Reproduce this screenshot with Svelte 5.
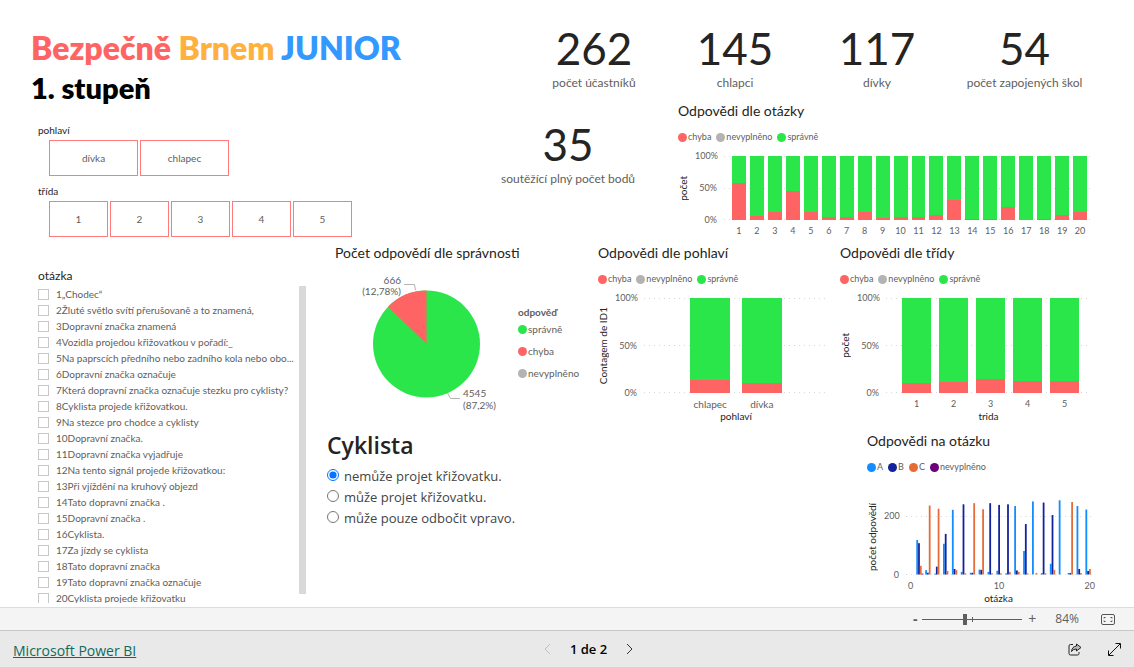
<script lang="ts">
  type Series = { name: string; color: string };
  type Bar = { label: string; chyba: number };

  const answerSeries: Series[] = [
    { name: 'chyba', color: '#ff6464' },
    { name: 'nevyplněno', color: '#b3b3b3' },
    { name: 'správně', color: '#2ae64a' },
  ];

  const optionSeries: Series[] = [
    { name: 'A', color: '#118dff' },
    { name: 'B', color: '#12239e' },
    { name: 'C', color: '#e66c37' },
    { name: 'nevyplněno', color: '#6b007b' },
  ];

  const pieLegend = [answerSeries[2], answerSeries[0], answerSeries[1]];

  const cards = [
    { value: 262, label: 'počet účastníků' },
    { value: 145, label: 'chlapci' },
    { value: 117, label: 'dívky' },
    { value: 54, label: 'počet zapojených škol' },
  ];

  const genders = ['dívka', 'chlapec'];
  const grades = ['1', '2', '3', '4', '5'];

  const questions = [
    '„Chodec“',
    'Žluté světlo svítí přerušovaně a to znamená,',
    'Dopravní značka znamená',
    'Vozidla projedou křižovatkou v pořadí:_',
    'Na paprscích předního nebo zadního kola nebo obo...',
    'Dopravní značka označuje',
    'Která dopravní značka označuje stezku pro cyklisty?',
    'Cyklista projede křižovatkou.',
    'Na stezce pro chodce a cyklisty',
    'Dopravní značka.',
    'Dopravní značka vyjadřuje',
    'Na tento signál projede křižovatkou:',
    'Při vjíždění na kruhový objezd',
    'Tato dopravní značka .',
    'Dopravní značka .',
    'Cyklista.',
    'Za jízdy se cyklista',
    'Tato dopravní značka',
    'Tato dopravní značka označuje',
    'Cyklista projede křižovatku',
  ];

  const byQuestion: Bar[] = [58, 7, 12, 45, 12, 5, 4, 12, 3, 5, 5, 8, 32, 1, 2, 20, 0, 2, 8, 12]
    .map((chyba, i) => ({ label: String(i + 1), chyba }));
  const byGender: Bar[] = [
    { label: 'chlapec', chyba: 14 },
    { label: 'dívka', chyba: 11 },
  ];
  const byGrade: Bar[] = [11, 12, 15, 13, 13].map((chyba, i) => ({ label: String(i + 1), chyba }));

  // A, B, C, nevyplněno
  const optionCounts = [
    [119, 108, 30, 3], [15, 6, 238, 0], [3, 27, 227, 0], [106, 140, 12, 0], [223, 19, 15, 0],
    [9, 242, 4, 0], [6, 6, 246, 0], [17, 16, 225, 0], [9, 246, 4, 0], [13, 240, 4, 0],
    [4, 242, 9, 0], [236, 14, 9, 0], [81, 174, 4, 0], [252, 0, 5, 0], [5, 248, 4, 0],
    [37, 205, 16, 0], [256, 0, 0, 0], [5, 5, 250, 0], [236, 19, 5, 0], [224, 12, 19, 0],
  ];

  const answers = ['nemůže projet křižovatku.', 'může projet křižovatku.', 'může pouze odbočit vpravo.'];

  let gender = $state('');
  let grade = $state('');
  let answer = $state(0);
  let zoom = $state(42);
</script>

{#snippet legend(items: Series[])}
  <ul class="legend">
    {#each items as item}
      <li><span class="dot" style="background: {item.color}"></span>{item.name}</li>
    {/each}
  </ul>
{/snippet}

{#snippet stacked(title: string, bars: Bar[], yTitle: string, xTitle: string, kind: string)}
  <section class="chart {kind}">
    <h2>{title}</h2>
    {@render legend(answerSeries)}
    <div class="body">
      <div class="y-title"><span>{yTitle}</span></div>
      <div class="y-axis"><span>100%</span><span>50%</span><span>0%</span></div>
      <div class="plot">
        {#each bars as bar}
          <div class="bar"><div class="wrong" style="height: {bar.chyba}%"></div></div>
        {/each}
      </div>
      <div class="x-axis">
        {#each bars as bar}<span>{bar.label}</span>{/each}
      </div>
      {#if xTitle}<div class="x-title">{xTitle}</div>{/if}
    </div>
  </section>
{/snippet}

<div class="app">
  <main>
    <div class="top">
      <div class="intro">
        <h1>
          <span class="red">Bezpečně</span> <span class="orange">Brnem</span> <span class="blue">JUNIOR</span>
          <small>1. stupeň</small>
        </h1>
        <div class="slicer">
          <h3>pohlaví</h3>
          <div class="tiles wide">
            {#each genders as g}
              <button aria-pressed={gender === g} onclick={() => (gender = gender === g ? '' : g)}>{g}</button>
            {/each}
          </div>
        </div>
        <div class="slicer">
          <h3>třída</h3>
          <div class="tiles">
            {#each grades as g}
              <button aria-pressed={grade === g} onclick={() => (grade = grade === g ? '' : g)}>{g}</button>
            {/each}
          </div>
        </div>
      </div>

      <div class="numbers">
        <div class="cards">
          {#each cards as card}
            <div class="card"><strong>{card.value}</strong><span>{card.label}</span></div>
          {/each}
        </div>
        <div class="second">
          <div class="card"><strong>35</strong><span>soutěžící plný počet bodů</span></div>
          {@render stacked('Odpovědi dle otázky', byQuestion, 'počet', '', 'by-question')}
        </div>
      </div>
    </div>

    <div class="bottom">
      <section class="questions">
        <h3>otázka</h3>
        <div class="scroller">
          <ul>
            {#each questions as question, i}
              <li>
                <label><input type="checkbox" /><span>{i + 1}{question}</span></label>
              </li>
            {/each}
          </ul>
          <div class="scrollbar"></div>
        </div>
      </section>

      <div class="charts">
        <section class="pie">
          <h2>Počet odpovědí dle správnosti</h2>
          <div class="pie-body">
            <svg viewBox="0 0 156 150" width="156" height="150" aria-label="Počet odpovědí dle správnosti">
              <circle cx="71.500" cy="81" r="53.500" fill="#2ae64a" />
              <path d="M71.500 81V27.500A53.500 53.500 0 0 0 33 43.800Z" fill="#ff6464" />
              <path d="M49 21.500H59.500L60.500 27M92.500 130L95.500 135.500H105" fill="none" stroke="#b3b3b3" />
              <text x="46" y="21" text-anchor="end">666</text>
              <text x="46" y="32" text-anchor="end">(12,78%)</text>
              <text x="108" y="134">4545</text>
              <text x="108" y="146">(87,2%)</text>
            </svg>
            <div class="pie-legend">
              <strong>odpověď</strong>
              {@render legend(pieLegend)}
            </div>
          </div>
        </section>
        {@render stacked('Odpovědi dle pohlaví', byGender, 'Contagem de ID1', 'pohlaví', 'by-gender')}
        {@render stacked('Odpovědi dle třídy', byGrade, 'počet', 'trida', 'by-grade')}

        <form class="quiz">
          <h2>Cyklista</h2>
          {#each answers as text, i}
            <label><input type="radio" name="answer" value={i} bind:group={answer} /><span>{text}</span></label>
          {/each}
        </form>

        <section class="chart options">
          <h2>Odpovědi na otázku</h2>
          {@render legend(optionSeries)}
          <div class="body">
            <div class="y-title"><span>počet odpovědí</span></div>
            <div class="y-axis"><span>200</span><span>0</span></div>
            <svg class="columns" viewBox="0 0 186 76" preserveAspectRatio="none" aria-label="Odpovědi na otázku">
              <path d="M0 17.500H186M0 75.500H186" stroke="#d8d8d8" stroke-dasharray="1 4" />
              {#each optionCounts as counts, q}
                {#each counts as count, s}
                  <rect
                    x={5 + (q + 1) * 8.95 + (s - 2) * 1.8}
                    y={75.5 - count * 0.29}
                    width="1.8"
                    height={count * 0.29}
                    fill={optionSeries[s].color}
                  />
                {/each}
              {/each}
            </svg>
            <div class="x-axis"><span>0</span><span>10</span><span>20</span></div>
            <div class="x-title">otázka</div>
          </div>
        </section>
      </div>
    </div>
  </main>

  <div class="zoom-bar">
    <button aria-label="Oddálit">-</button>
    <div class="slider">
      <input type="range" min="0" max="100" bind:value={zoom} aria-label="Přiblížení" />
    </div>
    <button aria-label="Přiblížit">+</button>
    <span class="percent">84%</span>
    <button class="fit" aria-label="Přizpůsobit stránce">
      <svg viewBox="0 0 14 11" width="14" height="11" fill="none" stroke="#555">
        <rect x=".5" y=".5" width="13" height="10" rx="1.500" />
        <path d="M3 4.500V3.500H4.500M9.500 3.500H11V4.500M11 6.500V7.500H9.500M4.500 7.500H3V6.500" />
      </svg>
    </button>
  </div>

  <footer>
    <div class="brand"><a href="https://powerbi.microsoft.com">Microsoft Power BI</a></div>
    <nav>
      <button aria-label="Předchozí stránka" disabled>
        <svg viewBox="0 0 7 12" width="7" height="12" fill="none" stroke="#c0c0c0"><path d="M6 1L1 6L6 11" /></svg>
      </button>
      <span>1 de 2</span>
      <button aria-label="Další stránka">
        <svg viewBox="0 0 7 12" width="7" height="12" fill="none" stroke="#333"><path d="M1 1L6 6L1 11" /></svg>
      </button>
    </nav>
    <div class="actions">
      <button aria-label="Sdílet">
        <svg viewBox="0 0 14 13" width="14" height="13" fill="none" stroke="#222" stroke-linejoin="round">
          <path d="M5 1.500H2.500Q1 1.500 1 3V10.500Q1 12 2.500 12H9.500Q11 12 11 10.500V9" />
          <path d="M8.500 1L13 4.500L8.500 8V6Q5 6 3.500 8.500Q4 3.500 8.500 3Z" fill="#bbb" />
        </svg>
      </button>
      <button aria-label="Celá obrazovka">
        <svg viewBox="0 0 13 13" width="13" height="13" fill="none" stroke="#111">
          <path d="M1 12L12 1M7.500 .5H12.500V5.500M.5 7.500V12.500H5.500" />
        </svg>
      </button>
    </div>
  </footer>
</div>

<style>
  :global(body) {
    margin: 0;
    background: #fff;
  }
  .app {
    display: flex;
    flex-direction: column;
    min-height: 100vh;
    font-family: Lato, 'Noto Sans', sans-serif;
    font-size: 10px;
    line-height: 12px;
    color: #605e5c;
  }
  h1, h2, h3, ul {
    margin: 0;
    padding: 0;
    font-weight: 400;
    list-style: none;
  }
  button {
    padding: 0;
    border: 0;
    background: none;
    color: inherit;
    font: inherit;
    cursor: pointer;
  }
  main {
    flex: 1;
  }

  .top {
    display: grid;
    grid-template-columns: 486fr 648fr;
    min-height: 243px;
  }
  .intro {
    padding: 28px 0 0 31px;
  }
  h1 {
    font-size: 32px;
    line-height: 40px;
    font-weight: 800;
    color: #000;
    white-space: nowrap;
  }
  h1 small {
    display: block;
    font-size: 29px;
  }
  .red { color: #ff6464; }
  .orange { color: #ffb140; }
  .blue { color: #3399ff; }

  .slicer {
    margin: 0 0 0 7px;
    padding-top: 16px;
  }
  .slicer + .slicer {
    padding-top: 9px;
  }
  h3 {
    font-size: 10px;
    line-height: 12px;
    color: #252423;
  }
  .tiles {
    display: grid;
    grid-template-columns: repeat(5, 59px);
    gap: 2px;
    padding: 4px 0 0 11px;
  }
  .tiles.wide {
    grid-template-columns: repeat(2, 89px);
  }
  .tiles button {
    height: 36px;
    border: 1px solid #ff7b7b;
  }
  .tiles button[aria-pressed='true'] {
    background: #ffe0e0;
  }

  .numbers {
    display: flex;
    flex-direction: column;
  }
  .cards {
    display: grid;
    grid-template-columns: 178fr 142fr 142fr 153fr;
    padding: 26px 33px 0 0;
  }
  .card {
    display: flex;
    flex-direction: column;
    align-items: center;
    white-space: nowrap;
  }
  .cards .card:first-child {
    padding-left: 38px;
  }
  .card strong {
    font-size: 44px;
    line-height: 44px;
    font-weight: 400;
    color: #252423;
  }
  .card span {
    padding-top: 5px;
    font-size: 12px;
    line-height: 16px;
  }
  .second {
    display: grid;
    grid-template-columns: 192fr 456fr;
  }
  .second .card {
    padding: 31px 28px 0 0;
  }

  h2 {
    font-size: 14px;
    line-height: 20px;
    color: #252423;
    white-space: nowrap;
  }
  .legend {
    display: flex;
    gap: 5px;
  }
  .legend li {
    display: flex;
    align-items: center;
    gap: 1px;
  }
  .dot {
    width: 9px;
    height: 9px;
    border-radius: 50%;
  }
  .chart .legend {
    padding: 10px 0 13px;
    font-size: 9px;
  }
  .body {
    display: grid;
    grid-template-columns: 10px 22px 1fr;
    column-gap: 7px;
    grid-template-areas: 'yt y plot' '. . x' '. . xt';
  }
  .y-title {
    grid-area: yt;
    display: flex;
    align-items: center;
    justify-content: center;
    color: #252423;
  }
  .y-title span {
    writing-mode: vertical-rl;
    transform: rotate(180deg);
    white-space: nowrap;
  }
  .y-axis {
    grid-area: y;
    display: flex;
    flex-direction: column;
    justify-content: space-between;
    margin: -6px 0;
    font-size: 9px;
    text-align: right;
  }
  .plot {
    grid-area: plot;
    display: flex;
    height: 95px;
    background:
      repeating-linear-gradient(to right, #d8d8d8 0 1px, transparent 1px 5px) top / 100% 1px no-repeat,
      repeating-linear-gradient(to right, #d8d8d8 0 1px, transparent 1px 5px) center / 100% 1px no-repeat,
      repeating-linear-gradient(to right, #d8d8d8 0 1px, transparent 1px 5px) bottom / 100% 1px no-repeat;
  }
  .bar {
    flex: 1;
    display: flex;
    align-items: flex-end;
    margin: 0 2px;
    background: #2ae64a;
  }
  .wrong {
    width: 100%;
    background: #ff6464;
  }
  .x-axis {
    grid-area: x;
    display: flex;
    padding-top: 5px;
    font-size: 9px;
    text-align: center;
  }
  .by-gender .x-axis {
    font-size: 10px;
  }
  .x-axis span {
    flex: 1;
  }
  .x-title {
    grid-area: xt;
    text-align: center;
    color: #252423;
  }

  .by-question {
    padding: 10px 43px 0 0;
  }
  .by-question .plot {
    height: 64px;
  }
  .by-question .plot, .by-question .x-axis {
    padding-left: 6px;
    padding-right: 2px;
  }
  .by-gender .plot, .by-gender .x-axis {
    padding-left: 22%;
    padding-right: 22%;
  }
  .by-gender .bar {
    margin: 0 6px;
  }
  .by-grade .plot, .by-grade .x-axis {
    padding-left: 12px;
    padding-right: 8px;
  }
  .by-grade .bar {
    margin: 0 4px;
  }

  .bottom {
    display: grid;
    grid-template-columns: 327fr 807fr;
  }
  .questions {
    padding: 26px 21px 0 38px;
    min-width: 0;
  }
  .questions h3 {
    font-size: 12px;
    line-height: 14px;
  }
  .scroller {
    display: flex;
    padding-top: 3px;
  }
  .scroller ul {
    flex: 1;
    min-width: 0;
    max-height: 317px;
    overflow: hidden;
  }
  .scroller li {
    padding: 1px 0;
  }
  .questions label {
    display: flex;
    align-items: center;
    gap: 7px;
    height: 14px;
  }
  .questions label span {
    white-space: nowrap;
  }
  .questions input {
    flex: none;
    appearance: none;
    width: 11px;
    height: 11px;
    margin: 0;
    border: 1px solid #c8c8c8;
    background: #fff;
  }
  .questions input:checked {
    background: #605e5c;
  }
  .scrollbar {
    width: 7px;
    height: 308px;
    background: #d9d9d9;
  }

  .charts {
    display: grid;
    grid-template-columns: 271fr 242fr 294fr;
    grid-template-rows: auto auto;
    align-items: start;
  }
  .charts .by-gender {
    padding-right: 12px;
  }
  .charts .by-grade {
    padding-right: 43px;
  }
  .pie h2 {
    padding-left: 8px;
  }
  .pie-body {
    display: flex;
    gap: 7px;
    padding-left: 28px;
  }
  .pie-body svg text {
    fill: #605e5c;
  }
  .pie-legend {
    padding-top: 43px;
  }
  .pie-legend .legend {
    flex-direction: column;
    gap: 10px;
    padding-top: 5px;
  }

  .quiz {
    grid-column: 1 / 3;
    padding-top: 7px;
    font-family: 'Open Sans', 'Noto Sans', sans-serif;
    color: #444;
  }
  .quiz h2 {
    padding-bottom: 5px;
    font-size: 23px;
    line-height: 32px;
    font-weight: 600;
  }
  .quiz label {
    display: flex;
    gap: 5px;
    font-size: 13px;
    line-height: 21px;
  }
  .quiz input {
    width: 12px;
    height: 12px;
    margin: 3px 0 0;
  }

  .options {
    padding: 9px 43px 0 27px;
  }
  .options .legend {
    padding-bottom: 26px;
  }
  .options .body {
    grid-template-columns: 10px 15px 1fr;
  }
  .options .y-axis {
    margin-top: 11px;
  }
  .columns {
    grid-area: plot;
    width: 100%;
    height: 76px;
  }
  .options .x-axis {
    justify-content: space-between;
    margin-left: 2px;
    margin-right: -4px;
  }
  .options .x-axis span {
    flex: none;
  }

  .zoom-bar {
    display: flex;
    align-items: center;
    justify-content: flex-end;
    height: 22px;
    padding-right: 19px;
    border-top: 1px solid #dcdcdc;
    border-bottom: 1px solid #c8c8c8;
    background: #f4f4f4;
    font-family: 'Open Sans', 'Noto Sans', sans-serif;
    font-size: 12px;
  }
  .zoom-bar > button:not(.fit) {
    width: 10px;
    font-size: 14px;
  }
  .zoom-bar > button:first-child {
    font-weight: 700;
  }
  .slider {
    display: flex;
    margin: 0 5px 0 2px;
  }
  .slider input {
    appearance: none;
    width: 100px;
    height: 11px;
    margin: 0;
    background:
      linear-gradient(#605e5c, #605e5c) 50px center / 1px 5px no-repeat,
      linear-gradient(#605e5c, #605e5c) center / 100% 1px no-repeat;
  }
  .slider input::-webkit-slider-thumb {
    appearance: none;
    width: 4px;
    height: 11px;
    background: #605e5c;
  }
  .percent {
    margin: 0 22px 0 18px;
  }
  .fit {
    display: flex;
  }

  footer {
    display: grid;
    grid-template-columns: 1fr auto 1fr;
    align-items: center;
    height: 36px;
    padding: 0 13px;
    background: #e9e9e9;
    font-family: 'Open Sans', 'Noto Sans', sans-serif;
    font-size: 13px;
    line-height: 20px;
  }
  .brand {
    padding-top: 3px;
  }
  footer a {
    color: #0f6b5c;
    font-size: 14px;
  }
  nav {
    display: flex;
    align-items: center;
    gap: 19px;
    padding-left: 43px;
    color: #000;
    font-weight: 600;
  }
  .actions {
    display: flex;
    justify-content: flex-end;
    gap: 26px;
  }
  footer button {
    display: flex;
  }
</style>
